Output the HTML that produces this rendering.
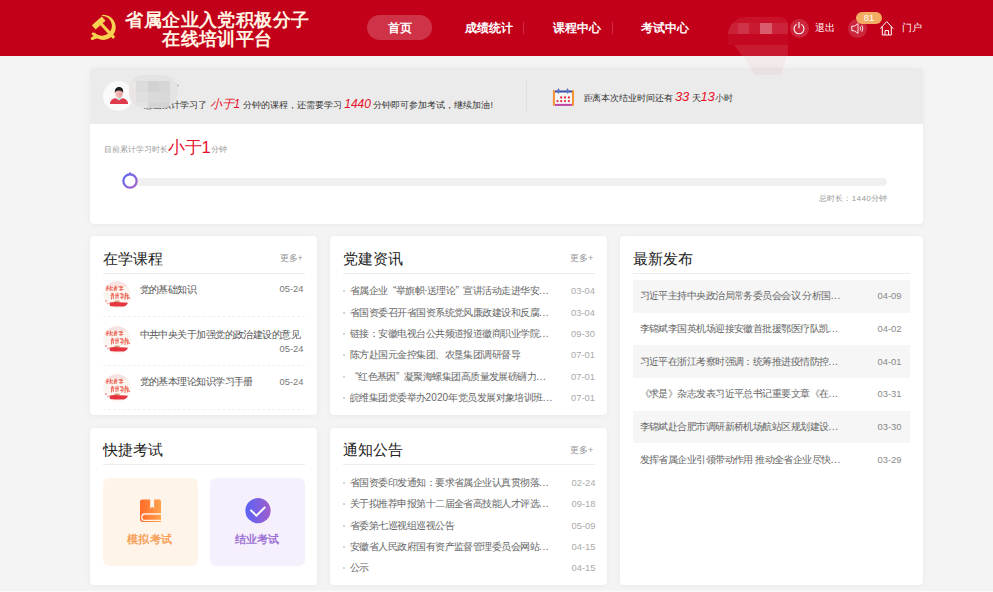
<!DOCTYPE html>
<html><head><meta charset="utf-8">
<style>
*{margin:0;padding:0;box-sizing:border-box}
html,body{width:993px;height:592px;overflow:hidden;background:#f4f4f4;font-family:"Liberation Sans",sans-serif;color:#333;position:relative}
.a{position:absolute;white-space:nowrap}
#hdr{position:absolute;left:0;top:0;width:993px;height:56px;background:#c3001a}
.title{position:absolute;left:117.5px;top:10.5px;width:200px;text-align:center;color:#fff4e2;font-family:"Liberation Serif",serif;font-weight:bold;font-size:18px;letter-spacing:0.45px;line-height:19px}
.pill{position:absolute;left:367px;top:15px;width:65px;height:25px;border-radius:13px;background:rgba(255,255,255,0.2)}
.nav{position:absolute;top:20px;font-size:12px;font-weight:bold;color:#fff;line-height:16px}
.sep{position:absolute;top:22px;width:1px;height:12px;background:rgba(255,255,255,0.18)}
.ic{position:absolute;top:18.5px;width:19px;height:19px;border-radius:50%;background:rgba(255,255,255,0.15)}
.ht{position:absolute;top:21px;font-size:10px;letter-spacing:0.4px;color:#fff;line-height:14px}
.card{position:absolute;background:#fff;border-radius:4px;box-shadow:0 1px 6px rgba(0,0,0,0.05)}
.ct{position:absolute;font-size:15px;color:#222;line-height:18px;white-space:nowrap}
.more{position:absolute;font-size:9px;color:#999;line-height:11px}
.hr{position:absolute;height:1px;background:#ebebf2}
.li{position:absolute;font-size:10px;letter-spacing:-0.55px;color:#666;line-height:12px;white-space:nowrap}
.dt{position:absolute;font-size:9.4px;color:#aaa;line-height:12px;white-space:nowrap;text-align:right}
.dot{position:absolute;width:2px;height:2px;background:#c6c6c6;border-radius:50%}
</style></head><body>

<div id="hdr">
 <svg class="a" style="left:86px;top:11px" width="34" height="34" viewBox="0 0 34 34">
  <g fill="#f7d150">
   <path d="M17.4 3.7 A12.6 12.6 0 1 1 8.90 25.85 L8.42 21.16 A9.9 9.9 0 1 0 15.14 4.94 Z"/>
   <rect x="-6.6" y="-2.8" width="13.2" height="5.6" transform="translate(12.7,12) rotate(-41)"/>
   <path d="M12.6 12.3 L14.8 10.2 L29.2 25.8 L27 28 Z"/>
   <path d="M10.6 23.3 L6.8 21.2 L5.4 22.8 L7.6 25.2 L5.6 26 Q3.9 27.6 5.3 28.8 Q6.8 29.6 8 28.2 L11 27.4 Z"/>
  </g>
 </svg>
 <div class="title">省属企业入党积极分子<br>在线培训平台</div>
 <div class="pill"></div>
 <div class="nav" style="left:387.5px">首页</div>
 <div class="nav" style="left:464.5px">成绩统计</div>
 <div class="sep" style="left:523px"></div>
 <div class="nav" style="left:552.5px">课程中心</div>
 <div class="sep" style="left:612px"></div>
 <div class="nav" style="left:640.5px">考试中心</div>
 <!-- mosaic -->
 <div class="a" style="left:728px;top:17px;width:60px;height:40px;overflow:hidden;border-radius:18px 8px 4px 22px / 18px 8px 4px 14px">
  <div class="a" style="left:0;top:0;width:60px;height:6px;background:rgba(255,255,255,0.07)"></div>
  <div class="a" style="left:0;top:6px;width:10px;height:11px;background:rgba(255,255,255,0.13)"></div>
  <div class="a" style="left:10px;top:6px;width:11px;height:11px;background:rgba(255,255,255,0.2)"></div>
  <div class="a" style="left:21px;top:6px;width:11px;height:11px;background:rgba(255,255,255,0.1)"></div>
  <div class="a" style="left:32px;top:6px;width:12px;height:11px;background:rgba(255,255,255,0.36)"></div>
  <div class="a" style="left:44px;top:6px;width:16px;height:11px;background:rgba(255,255,255,0.14)"></div>
  <div class="a" style="left:0;top:17px;width:60px;height:11px;background:rgba(255,255,255,0.03)"></div>
  <div class="a" style="left:0;top:28px;width:60px;height:12px;background:rgba(255,255,255,0.1);clip-path:polygon(6px 0,60px 0,60px 12px,15px 12px)"></div>
 </div>
 <div class="ic" style="left:790px"></div>
 <svg class="a" style="left:792px;top:21px" width="14" height="14" viewBox="0 0 14 14"><path d="M4.2 3.6 A5 5 0 1 0 9.8 3.6" fill="none" stroke="#fff" stroke-width="1.1" stroke-linecap="round"/><path d="M7 1.6 V6.8" stroke="#fff" stroke-width="1.1" stroke-linecap="round"/></svg>
 <div class="ht" style="left:815px">退出</div>
 <div class="ic" style="left:848px"></div>
 <svg class="a" style="left:851px;top:23px" width="14" height="11" viewBox="0 0 14 11"><path d="M0.8 3.2 H3.4 L7 0.6 V10.4 L3.4 7.8 H0.8 Z" fill="none" stroke="#fff" stroke-width="0.9" stroke-linejoin="round"/><path d="M9 3.5 Q10.3 5.5 9 7.5" fill="none" stroke="#fff" stroke-width="0.9"/><path d="M10.8 2.2 Q12.9 5.5 10.8 8.8" fill="none" stroke="#fff" stroke-width="0.9"/></svg>
 <div class="a" style="left:856px;top:12px;width:26px;height:12px;border-radius:6px;background:#f3ad62;color:#fff;font-size:9.5px;line-height:12px;text-align:center">81</div>
 <svg class="a" style="left:880px;top:21px" width="14" height="15" viewBox="0 0 14 15"><path d="M0.6 7.3 L6.7 0.6 L12.9 7.3" fill="none" stroke="#fff" stroke-width="1" stroke-linejoin="round" stroke-linecap="round"/><path d="M2.3 5.6 V14 H11.3 V5.6" fill="none" stroke="#fff" stroke-width="1"/><path d="M5 14 V9.6 H8.6 V14" fill="none" stroke="#fff" stroke-width="1"/></svg>
 <div class="ht" style="left:902px">门户</div>
</div>


<!-- top card -->
<div class="card" style="left:90px;top:68px;width:833px;height:156px;overflow:hidden">
 <div class="a" style="left:0;top:0;width:833px;height:56px;background:#ebebeb"></div>
 <div class="a" style="left:436px;top:13px;width:1px;height:31px;background:#e0e0e0"></div>
</div>
<div class="a" style="left:103px;top:81px;width:30px;height:30px;border-radius:50%;background:#fafafa"></div>
<svg class="a" style="left:108px;top:85px" width="22" height="20" viewBox="0 0 22 20">
 <path d="M2 19 C2 15.5 4 14 7 13.2 L15 13.2 C18 14 20 15.5 20 19 Z" fill="#e23a4d"/>
 <path d="M7.5 13 L11 15.5 L14.5 13 Z" fill="#bfe6df"/>
 <ellipse cx="11" cy="8.5" rx="3.6" ry="4.3" fill="#f2b7b3"/>
 <path d="M11 4.2 L11 12.8 C13 12.8 14.6 10.8 14.6 8.5 C14.6 6 13 4.2 11 4.2Z" fill="#e8a4a2"/>
 <path d="M6.8 8 C6.5 3.5 9 2 11 2 C13.5 2 15.5 3.5 15.2 8 C14.5 6.5 13.5 5.6 11 5.6 C8.5 5.6 7.5 6.5 6.8 8Z" fill="#1e1e1e"/>
</svg>
<div class="a" style="z-index:2;left:129px;top:75px;width:49px;height:33px;border-radius:14px 16px 18px 16px;overflow:hidden">
 <div class="a" style="left:0;top:0;width:49px;height:33px;background:#e4e4e4"></div>
 <div class="a" style="left:0;top:6px;width:7px;height:22px;background:#ece5e5"></div>
 <div class="a" style="left:7px;top:6px;width:12px;height:11px;background:#dcdcdc"></div>
 <div class="a" style="left:19px;top:6px;width:11px;height:11px;background:#d2d2d2"></div>
 <div class="a" style="left:30px;top:6px;width:11px;height:11px;background:#d6d6d6"></div>
 <div class="a" style="left:7px;top:17px;width:12px;height:11px;background:#e0e0e0"></div>
 <div class="a" style="left:19px;top:17px;width:11px;height:11px;background:#dadada"></div>
 <div class="a" style="left:30px;top:17px;width:11px;height:11px;background:#d8d8d8"></div>
 <div class="a" style="left:19px;top:28px;width:22px;height:5px;background:#d4d4d4"></div>
</div>
<div class="a" style="left:176px;top:83px;font-size:8px;color:#aaa;line-height:8px">*</div>
<div class="a" style="left:144px;top:97px;font-size:9px;color:#333;line-height:14px">您已累计学习了 <span style="color:#e8102a;font-size:12px;font-style:italic">小于1</span> 分钟的课程，还需要学习 <span style="color:#e8102a;font-size:12px;font-style:italic">1440</span> 分钟即可参加考试，继续加油!</div>
<svg class="a" style="left:552px;top:87px" width="23" height="20" viewBox="0 -1 23 20">
 <rect x="1.5" y="3" width="19.5" height="14" fill="#f7f4f6"/>
 <rect x="2.5" y="2.5" width="18" height="2" fill="#3d4fa0"/>
 <rect x="0.9" y="2.1" width="2" height="15.8" rx="0.8" fill="#f39232"/>
 <rect x="20" y="2.1" width="2" height="15.8" rx="0.8" fill="#f39232"/>
 <path d="M6.5 -0.1 L7.6 2 L7.6 4 L6.5 5.9 L5.4 4 L5.4 2 Z" fill="#5a74c0"/>
 <path d="M15.5 -0.1 L16.6 2 L16.6 4 L15.5 5.9 L14.4 4 L14.4 2 Z" fill="#5a74c0"/>
 <rect x="2.9" y="15.9" width="17.1" height="2" fill="#bf45a5"/>
 <g fill="#e2303e"><circle cx="9.2" cy="9.5" r="1.15"/><circle cx="13" cy="9.5" r="1.15"/><circle cx="16.9" cy="9.5" r="1.15"/>
 <circle cx="5.5" cy="13.1" r="1.15"/><circle cx="9.2" cy="13.1" r="1.15"/><circle cx="13" cy="13.1" r="1.15"/><circle cx="16.9" cy="13.1" r="1.15"/></g>
</svg>
<div class="a" style="left:583.5px;top:90px;font-size:9px;letter-spacing:-0.1px;color:#333;line-height:14px">距离本次结业时间还有 <span style="color:#e8102a;font-size:13px;font-style:italic">33</span> 天<span style="color:#e8102a;font-size:13px;font-style:italic">13</span>小时</div>
<div class="a" style="left:103.5px;top:140px;font-size:8px;color:#999;line-height:12px">目前累计学习时长<span style="color:#e8102a;font-size:16.5px;position:relative;top:1px">小于1</span>分钟</div>
<div class="a" style="left:122px;top:178px;width:765px;height:8px;border-radius:4px;background:#f0f0f0"></div>
<svg class="a" style="left:120px;top:170px" width="20" height="21" viewBox="0 0 20 21">
 <defs><linearGradient id="pg" x1="0" y1="0" x2="1" y2="1"><stop offset="0" stop-color="#5d6af5"/><stop offset="1" stop-color="#a45cc8"/></linearGradient></defs>
 <circle cx="10" cy="11" r="6.6" fill="#fff" stroke="url(#pg)" stroke-width="2.2"/>
 <path d="M8.6 4 L10 1.6 L11.4 4 Z" fill="#7b62e0"/>
</svg>
<div class="a" style="left:818.5px;top:193px;font-size:8px;letter-spacing:0.33px;color:#999;line-height:11px">总时长：1440分钟</div>

<!-- card1 -->
<div class="card" style="left:90px;top:236px;width:227px;height:179px"></div>
<div class="ct" style="left:102.5px;top:249.5px">在学课程</div>
<div class="more" style="left:279.5px;top:252.5px">更多+</div>
<div class="hr" style="left:103px;top:273px;width:202px"></div>
<svg class="a" style="left:102.9px;top:281.4px" width="28" height="28" viewBox="0 0 28 28"><defs><clipPath id="cc1"><circle cx="14" cy="14" r="13.8"/></clipPath></defs><g clip-path="url(#cc1)"><rect width="28" height="28" fill="#fcf5f1"/><ellipse cx="14" cy="2" rx="12" ry="5" fill="#f6dcdc" opacity="0.7"/><g fill="none" stroke="#e8503e" stroke-width="1.1" stroke-linecap="round" opacity="0.8"><path d="M3 6 L5.5 6 M4.2 5 L4 9.5 M3 8 L5.8 7.5"/><path d="M7.5 5 L7 9.5 M6.8 7 L9.5 6.6 M8 8.8 L10 9.2"/><path d="M12 5.5 L11.5 9.5 M11 7.5 L14 7 M13 5 L13.2 9.5"/><path d="M16 6 Q18 5 19.5 6.5 M16.5 8.8 L20 8.5 M18 5.5 L18 9.5"/><path d="M9 12 L8.5 18 M8 14.5 L11 14 M10 12.5 L10.5 17.5"/><path d="M13 12.5 L13 17.5 M12.5 14.5 L15.5 14.5 M14.8 12 L15 17"/><path d="M17 13 Q19 12 20.5 14 M17.5 16.5 L21 16 M19 12.5 L19 18"/><path d="M22.5 12 L22 18.5 M21.8 14.8 L25.5 14.2 M24 12.5 L24.5 18 M25 16 L26.5 17.5"/></g><rect x="11.5" y="19.6" width="5" height="1.8" fill="#c88a5a" opacity="0.8"/><path d="M6.5 21.5 Q10 20.8 16 21.2 T25 21.8 L23.5 25.2 Q15 26 7 25 Z" fill="#e2202e" opacity="0.9"/><circle cx="3" cy="20" r="1" fill="#e8606a" opacity="0.6"/><circle cx="5" cy="22.5" r="0.8" fill="#e8606a" opacity="0.6"/></g></svg>
<div class="li" style="left:139.5px;top:283.5px;color:#555">党的基础知识</div>
<div class="dt" style="left:279.5px;top:283px;color:#777">05-24</div>
<div class="a" style="left:103px;top:316px;width:202px;border-top:1px dashed #efefef"></div>
<svg class="a" style="left:102.9px;top:326.4px" width="28" height="28" viewBox="0 0 28 28"><defs><clipPath id="cc2"><circle cx="14" cy="14" r="13.8"/></clipPath></defs><g clip-path="url(#cc2)"><rect width="28" height="28" fill="#fcf5f1"/><ellipse cx="14" cy="2" rx="12" ry="5" fill="#f6dcdc" opacity="0.7"/><g fill="none" stroke="#e8503e" stroke-width="1.1" stroke-linecap="round" opacity="0.8"><path d="M3 6 L5.5 6 M4.2 5 L4 9.5 M3 8 L5.8 7.5"/><path d="M7.5 5 L7 9.5 M6.8 7 L9.5 6.6 M8 8.8 L10 9.2"/><path d="M12 5.5 L11.5 9.5 M11 7.5 L14 7 M13 5 L13.2 9.5"/><path d="M16 6 Q18 5 19.5 6.5 M16.5 8.8 L20 8.5 M18 5.5 L18 9.5"/><path d="M9 12 L8.5 18 M8 14.5 L11 14 M10 12.5 L10.5 17.5"/><path d="M13 12.5 L13 17.5 M12.5 14.5 L15.5 14.5 M14.8 12 L15 17"/><path d="M17 13 Q19 12 20.5 14 M17.5 16.5 L21 16 M19 12.5 L19 18"/><path d="M22.5 12 L22 18.5 M21.8 14.8 L25.5 14.2 M24 12.5 L24.5 18 M25 16 L26.5 17.5"/></g><rect x="11.5" y="19.6" width="5" height="1.8" fill="#c88a5a" opacity="0.8"/><path d="M6.5 21.5 Q10 20.8 16 21.2 T25 21.8 L23.5 25.2 Q15 26 7 25 Z" fill="#e2202e" opacity="0.9"/><circle cx="3" cy="20" r="1" fill="#e8606a" opacity="0.6"/><circle cx="5" cy="22.5" r="0.8" fill="#e8606a" opacity="0.6"/></g></svg>
<div class="li" style="left:139.5px;top:329px;color:#555">中共中央关于加强党的政治建设的意见</div>
<div class="dt" style="left:279.5px;top:343px;color:#777">05-24</div>
<div class="a" style="left:103px;top:365px;width:202px;border-top:1px dashed #efefef"></div>
<svg class="a" style="left:102.9px;top:373.9px" width="28" height="28" viewBox="0 0 28 28"><defs><clipPath id="cc3"><circle cx="14" cy="14" r="13.8"/></clipPath></defs><g clip-path="url(#cc3)"><rect width="28" height="28" fill="#fcf5f1"/><ellipse cx="14" cy="2" rx="12" ry="5" fill="#f6dcdc" opacity="0.7"/><g fill="none" stroke="#e8503e" stroke-width="1.1" stroke-linecap="round" opacity="0.8"><path d="M3 6 L5.5 6 M4.2 5 L4 9.5 M3 8 L5.8 7.5"/><path d="M7.5 5 L7 9.5 M6.8 7 L9.5 6.6 M8 8.8 L10 9.2"/><path d="M12 5.5 L11.5 9.5 M11 7.5 L14 7 M13 5 L13.2 9.5"/><path d="M16 6 Q18 5 19.5 6.5 M16.5 8.8 L20 8.5 M18 5.5 L18 9.5"/><path d="M9 12 L8.5 18 M8 14.5 L11 14 M10 12.5 L10.5 17.5"/><path d="M13 12.5 L13 17.5 M12.5 14.5 L15.5 14.5 M14.8 12 L15 17"/><path d="M17 13 Q19 12 20.5 14 M17.5 16.5 L21 16 M19 12.5 L19 18"/><path d="M22.5 12 L22 18.5 M21.8 14.8 L25.5 14.2 M24 12.5 L24.5 18 M25 16 L26.5 17.5"/></g><rect x="11.5" y="19.6" width="5" height="1.8" fill="#c88a5a" opacity="0.8"/><path d="M6.5 21.5 Q10 20.8 16 21.2 T25 21.8 L23.5 25.2 Q15 26 7 25 Z" fill="#e2202e" opacity="0.9"/><circle cx="3" cy="20" r="1" fill="#e8606a" opacity="0.6"/><circle cx="5" cy="22.5" r="0.8" fill="#e8606a" opacity="0.6"/></g></svg>
<div class="li" style="left:139.5px;top:375.5px;color:#555">党的基本理论知识学习手册</div>
<div class="dt" style="left:279.5px;top:375.5px;color:#777">05-24</div>
<div class="a" style="left:103px;top:409px;width:202px;border-top:1px dashed #efefef"></div>

<!-- card2 -->
<div class="card" style="left:330px;top:236px;width:277px;height:179px"></div>
<div class="ct" style="left:342.5px;top:249.5px">党建资讯</div>
<div class="more" style="left:570px;top:252.5px">更多+</div>
<div class="hr" style="left:342.5px;top:273px;width:252.5px"></div>
<div class="dot" style="left:343px;top:290.10px"></div>
<div class="li" style="left:350px;top:285.10px">省属企业<span style="margin-left:5.3px">“</span>举旗帜·送理论<span style="margin-right:5.3px">”</span>宣讲活动走进华安<span style="letter-spacing:0.6px">...</span></div>
<div class="dt" style="left:571px;top:285.10px">03-04</div>
<div class="dot" style="left:343px;top:311.55px"></div>
<div class="li" style="left:350px;top:306.55px">省国资委召开省国资系统党风廉政建设和反腐<span style="letter-spacing:0.6px">...</span></div>
<div class="dt" style="left:571px;top:306.55px">03-04</div>
<div class="dot" style="left:343px;top:333.00px"></div>
<div class="li" style="left:350px;top:328.00px">链接：安徽电视台公共频道报道徽商职业学院<span style="letter-spacing:0.6px">...</span></div>
<div class="dt" style="left:571px;top:328.00px">09-30</div>
<div class="dot" style="left:343px;top:354.45px"></div>
<div class="li" style="left:350px;top:349.45px">陈方赴国元金控集团、农垦集团调研督导</div>
<div class="dt" style="left:571px;top:349.45px">07-01</div>
<div class="dot" style="left:343px;top:375.90px"></div>
<div class="li" style="left:350px;top:370.90px"><span style="margin-left:5.3px">“</span>红色基因<span style="margin-right:5.3px">”</span>凝聚海螺集团高质量发展磅礴力<span style="letter-spacing:0.6px">...</span></div>
<div class="dt" style="left:571px;top:370.90px">07-01</div>
<div class="dot" style="left:343px;top:397.35px"></div>
<div class="li" style="left:350px;top:392.35px">皖维集团党委举办<span style="letter-spacing:0.1px">2020</span>年党员发展对象培训班<span style="letter-spacing:0.6px">...</span></div>
<div class="dt" style="left:571px;top:392.35px">07-01</div>

<!-- card3 -->
<div class="card" style="left:620px;top:236px;width:303px;height:349px"></div>
<div class="ct" style="left:632.5px;top:249.5px">最新发布</div>
<div class="hr" style="left:632.5px;top:273px;width:277.5px"></div>
<div class="a" style="left:632.5px;top:280.00px;width:277.5px;height:32.6px;background:#f6f6f6"></div>
<div class="li" style="left:639.5px;top:290.30px">习近平主持中央政治局常务委员会会议 分析国<span style="letter-spacing:0.6px">...</span></div>
<div class="dt" style="left:877.5px;top:290.30px;color:#888">04-09</div>
<div class="li" style="left:639.5px;top:322.95px">李锦斌李国英机场迎接安徽首批援鄂医疗队凯<span style="letter-spacing:0.6px">...</span></div>
<div class="dt" style="left:877.5px;top:322.95px;color:#888">04-02</div>
<div class="a" style="left:632.5px;top:345.30px;width:277.5px;height:32.6px;background:#f6f6f6"></div>
<div class="li" style="left:639.5px;top:355.60px">习近平在浙江考察时强调：统筹推进疫情防控<span style="letter-spacing:0.6px">...</span></div>
<div class="dt" style="left:877.5px;top:355.60px;color:#888">04-01</div>
<div class="li" style="left:639.5px;top:388.25px">《求是》杂志发表习近平总书记重要文章《在<span style="letter-spacing:0.6px">...</span></div>
<div class="dt" style="left:877.5px;top:388.25px;color:#888">03-31</div>
<div class="a" style="left:632.5px;top:410.60px;width:277.5px;height:32.6px;background:#f6f6f6"></div>
<div class="li" style="left:639.5px;top:420.90px">李锦斌赴合肥市调研新桥机场航站区规划建设<span style="letter-spacing:0.6px">...</span></div>
<div class="dt" style="left:877.5px;top:420.90px;color:#888">03-30</div>
<div class="li" style="left:639.5px;top:453.55px">发挥省属企业引领带动作用 推动全省企业尽快<span style="letter-spacing:0.6px">...</span></div>
<div class="dt" style="left:877.5px;top:453.55px;color:#888">03-29</div>

<!-- card4 -->
<div class="card" style="left:90px;top:428px;width:227px;height:157px"></div>
<div class="ct" style="left:102.5px;top:441px">快捷考试</div>
<div class="hr" style="left:103px;top:464px;width:202px"></div>
<div class="a" style="left:103px;top:477.5px;width:94.5px;height:88px;border-radius:6px;background:#fff4ea"></div>
<div class="a" style="left:210px;top:477.5px;width:95px;height:88px;border-radius:6px;background:#f5f0fc"></div>
<svg class="a" style="left:139px;top:499px" width="23" height="24" viewBox="0 0 23 24">
 <defs><linearGradient id="bg1" x1="0" y1="0" x2="1" y2="0"><stop offset="0" stop-color="#ff6a28"/><stop offset="1" stop-color="#ffa24c"/></linearGradient></defs>
 <path d="M3.2 0.5 H20 Q22 0.5 22 2.5 V23 H4 Q1 23 1 20 V2.7 Q1 0.5 3.2 0.5 Z" fill="url(#bg1)"/>
 <path d="M11.2 0 H15.2 V9.6 L13.2 7.8 L11.2 9.6 Z" fill="#fff4ea"/>
 <path d="M22.5 15 H5.2 Q2.8 15 2.8 18.2 Q2.8 21.4 5.2 21.4 H22.5" fill="none" stroke="#fff4ea" stroke-width="1.3"/>
</svg>
<div class="a" style="left:127px;top:532px;font-size:11px;letter-spacing:0.3px;font-weight:bold;color:#f6a058;line-height:14px">模拟考试</div>
<svg class="a" style="left:244.5px;top:498px" width="26" height="26" viewBox="0 0 26 26">
 <defs><linearGradient id="bg2" x1="0" y1="0" x2="1" y2="0"><stop offset="0" stop-color="#5b63f6"/><stop offset="1" stop-color="#a05fcc"/></linearGradient></defs>
 <circle cx="13" cy="12.7" r="12.6" fill="url(#bg2)"/>
 <path d="M5.4 11.9 L11.4 17.6 L20.3 8.9" fill="none" stroke="#fff" stroke-width="2" stroke-linecap="butt" stroke-linejoin="miter"/>
</svg>
<div class="a" style="left:234.5px;top:532px;font-size:11px;letter-spacing:0.3px;font-weight:bold;color:#9f72d6;line-height:14px">结业考试</div>

<!-- card5 -->
<div class="card" style="left:330px;top:428px;width:277px;height:157px"></div>
<div class="ct" style="left:342.5px;top:441px">通知公告</div>
<div class="more" style="left:570px;top:444.5px">更多+</div>
<div class="hr" style="left:342.5px;top:464px;width:252.5px"></div>
<div class="dot" style="left:343px;top:481.80px"></div>
<div class="li" style="left:350px;top:476.80px">省国资委印发通知：要求省属企业认真贯彻落<span style="letter-spacing:0.6px">...</span></div>
<div class="dt" style="left:571.5px;top:476.80px">02-24</div>
<div class="dot" style="left:343px;top:503.15px"></div>
<div class="li" style="left:350px;top:498.15px">关于拟推荐申报第十二届全省高技能人才评选<span style="letter-spacing:0.6px">...</span></div>
<div class="dt" style="left:571.5px;top:498.15px">09-18</div>
<div class="dot" style="left:343px;top:524.50px"></div>
<div class="li" style="left:350px;top:519.50px">省委第七巡视组巡视公告</div>
<div class="dt" style="left:571.5px;top:519.50px">05-09</div>
<div class="dot" style="left:343px;top:545.85px"></div>
<div class="li" style="left:350px;top:540.85px">安徽省人民政府国有资产监督管理委员会网站<span style="letter-spacing:0.6px">...</span></div>
<div class="dt" style="left:571.5px;top:540.85px">04-15</div>
<div class="dot" style="left:343px;top:567.20px"></div>
<div class="li" style="left:350px;top:562.20px">公示</div>
<div class="dt" style="left:571.5px;top:562.20px">04-15</div>
<div class="a" style="left:0;top:591px;width:993px;height:1px;background:#fafafa"></div>
<div class="a" style="left:743px;top:56px;width:45px;height:19px;background:rgba(200,0,40,0.045);clip-path:polygon(0.5px 0,44px 0,37.6px 19px,11.8px 19px)"></div>
</body></html>
